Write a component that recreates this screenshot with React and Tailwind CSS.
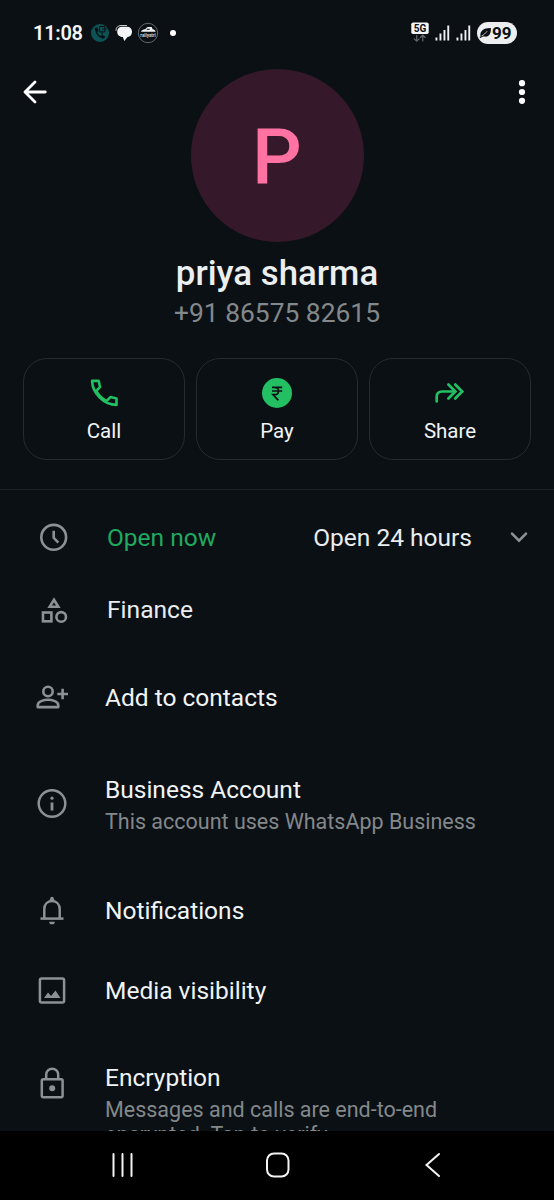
import clsx from "clsx";

const ClockIcon = () => (
  <svg width="30" height="30" viewBox="0 0 30 30" fill="none" stroke="currentColor" strokeWidth="2.6">
    <circle cx="14.7" cy="14.3" r="12.4" />
    <path d="M14.7 7.800v7l4.600 4.800" />
  </svg>
);

const CategoryIcon = () => (
  <svg width="30" height="30" viewBox="0 0 30 30" fill="none" stroke="currentColor" strokeWidth="2.600">
    <path d="M15 4.700l4.300 7h-8.600z" />
    <rect x="4" y="17.500" width="8.400" height="8.800" />
    <circle cx="22.200" cy="21.900" r="4.800" />
  </svg>
);

const AddPersonIcon = () => (
  <svg width="34" height="30" viewBox="0 0 34 30" fill="none" stroke="currentColor" strokeWidth="2.600">
    <circle cx="13" cy="8.500" r="4.700" />
    <path d="M2.700 22.500c0-2.300 1.300-3.600 3.400-4.400 4.400-1.700 9.400-1.700 13.800 0 2.100.8 3.400 2.100 3.400 4.400v1.600H2.700z" strokeLinejoin="round" />
    <path d="M27.600 5.800v10.500M22.300 11h10.700" />
  </svg>
);

const InfoIcon = () => (
  <svg width="30" height="30" viewBox="0 0 30 30" fill="none" stroke="currentColor" strokeWidth="2.500">
    <circle cx="15" cy="14.500" r="13.300" />
    <path d="M15 13.500v8" strokeWidth="2.800" />
    <circle cx="15" cy="9.200" r="1.600" fill="currentColor" stroke="none" />
  </svg>
);

const BellIcon = () => (
  <svg width="30" height="30" viewBox="0 0 30 30" fill="none" stroke="currentColor" strokeWidth="2.500">
    <path d="M7.300 22v-8.700c0-5 3.200-8.200 7.700-8.200s7.700 3.200 7.700 8.200V22" />
    <path d="M3.500 22.600h23" />
    <path d="M12.200 5.500l1-3a1.800 1.800 0 0 1 3.600 0l1 3z" fill="currentColor" stroke="none" />
    <path d="M12.200 25.700h5.600a2.800 2.600 0 0 1-5.600 0z" fill="currentColor" stroke="none" />
  </svg>
);

const MediaIcon = () => (
  <svg width="30" height="30" viewBox="0 0 30 30" fill="none" stroke="currentColor" strokeWidth="2.500">
    <rect x="2.900" y="2.600" width="24.200" height="24" rx="1.800" />
    <path d="M7 22l4-5.600 3.100 3.500 4.400-5.300L23.500 22z" fill="currentColor" stroke="none" />
  </svg>
);

const LockIcon = () => (
  <svg width="30" height="34" viewBox="0 0 30 34" fill="none" stroke="currentColor" strokeWidth="2.500">
    <rect x="4.800" y="13.200" width="20.800" height="18" rx="1.500" />
    <path d="M9.200 13V8.700a6 6 0 0 1 12 0V13" />
    <circle cx="15.200" cy="22.300" r="3" fill="currentColor" stroke="none" />
  </svg>
);

const CallIcon = () => (
  <svg width="32" height="32" viewBox="0 0 32 32" fill="none" stroke="#22c063" strokeWidth="2.600" strokeLinejoin="round">
    <path d="M4.100 3.900h6.600l1.300 6.200-3.900 3.900c2.500 4.400 6 7.700 10.400 10.100l3.900-4 6.100 1.300v6.500C16.200 27.900 4.300 16.100 4.100 3.900z" />
  </svg>
);

const PayIcon = () => (
  <svg width="32" height="32" viewBox="0 0 32 32" fill="none">
    <circle cx="16" cy="16" r="15" fill="#22c063" />
    <path d="M11 10.300h10.200M11 14h10.200M11 10.300h2.600c5.200 0 5.200 7.400 0 7.400H12l5.400 5.600" stroke="#0b1014" strokeWidth="1.700" />
  </svg>
);

const ShareIcon = () => (
  <svg width="32" height="32" viewBox="0 0 32 32" fill="none" stroke="#22c063" strokeWidth="2.700" strokeLinecap="round">
    <path d="M2.700 24.500v-4.800q0-5.200 5.400-5.200h12.700" />
    <path d="M14.400 7.500l7 7-7 7M21.200 7.500l7 7-7 7" />
  </svg>
);

const SignalBars = ({ className }) => (
  <svg className={clsx(className)} width="15" height="16" viewBox="0 0 15 16" fill="#eef0f1">
    <rect x="0.500" y="12.500" width="1.900" height="3" />
    <rect x="4.500" y="8.500" width="1.900" height="7" />
    <rect x="8.500" y="5" width="1.900" height="10.500" />
    <rect x="12.300" y="0.500" width="1.900" height="15" />
  </svg>
);

const StatusBar = () => (
  <div className="flex h-[66px] shrink-0 items-center pl-[33px] pr-[37px]">
    <span className="w-[51px] text-[20px] font-semibold tracking-[-0.3px] text-[#f4f6f7]">11:08</span>
    <div className="flex items-center">
      <svg className="ml-[6px]" width="20" height="20" viewBox="0 0 20 20" fill="none">
        <circle cx="10" cy="10" r="9" fill="#0d5355" />
        <path d="M5.200 4.800c-1.500 1.700 1.600 8.600 6.300 10.400 2.100.8 3.900-.2 3.600-1.600l-2.700-1.700-1.500 1.200c-1.800-.8-3-2.300-3.500-3.900l1.200-1.500-1.300-3.100z" fill="#0b1014" />
        <path d="M9.500 3.500h5.400v5.400h-5.400zM12 6h4.500M12 8.900v3" stroke="#0b1014" strokeWidth="1" />
      </svg>
      <svg className="ml-[5px]" width="20" height="20" viewBox="0 0 20 20">
        <path d="M1 7.800C.9 4.300 3 2.700 6 2.500h6" fill="none" stroke="#c9cccd" strokeWidth="1" />
        <path d="M7 3.700h5c3.200 0 5 2 5 5s-1.800 5-4.500 5.300l-3.200 4-1.500-4C4.200 13.800 2.200 11.700 2.200 8.700c0-3 1.800-5 4.800-5z" fill="#f4f6f7" />
      </svg>
      <svg className="ml-[2px]" width="22" height="22" viewBox="0 0 22 22" fill="none">
        <circle cx="11" cy="11" r="9.700" stroke="#62686c" />
        <path d="M3.800 9.800c1.300-2.100 3.100-2.500 4.600-2.500.7-1.700 2-2.200 3.900-2.200h2.500l.8 2.200c1.700.2 2.700 1.100 3 2.500z" fill="#eef0f1" />
        <path d="M9.700 7.300h3" stroke="#0b1014" />
        <text x="11" y="14.600" textAnchor="middle" fontSize="4.500" fontWeight="700" fill="#cdd0d2">railyatri</text>
      </svg>
      <span className="ml-[11px] h-[6px] w-[6px] rounded-full bg-white" />
    </div>

    <div className="ml-auto flex items-center">
      <svg width="18" height="22" viewBox="0 0 18 22" fill="none">
        <rect x="0.300" y="0.500" width="17.400" height="11.500" rx="1.800" fill="#f4f6f7" />
        <text x="9" y="9.800" textAnchor="middle" fontSize="10" fontWeight="700" fill="#0b1014">5G</text>
        <path d="M5.700 13v6M3 16.600l2.700 2.600 2.700-2.600M11.800 19.500v-6M9.100 15.800l2.700-2.600 2.700 2.600" stroke="#62686c" strokeWidth="1.200" />
      </svg>
      <SignalBars className="ml-[6px]" />
      <SignalBars className="ml-[6px]" />
      <div className="ml-[6px] flex h-[22px] w-[40px] items-center rounded-full bg-[#eceeef] pl-[2px] text-[#0b1014]">
        <svg width="13" height="12" viewBox="0 0 13 12">
          <path d="M1.500 9.300C.6 4 4.600.8 11.800 1c.5 5.400-1.800 9.200-6 8.600-1 0-1.700-.2-2.300-.6z" fill="currentColor" />
          <path d="M.8 10.500C3 9.800 5.300 7.500 8 4.600" stroke="currentColor" strokeWidth="1.200" fill="none" />
          <path d="M2.600 8.900C4.700 8.200 6.200 6.300 8.200 4.200" stroke="#eceeef" strokeWidth=".8" fill="none" />
        </svg>
        <span className="text-[17px] font-bold leading-none">99</span>
      </div>
    </div>
  </div>
);

const ActionButton = ({ icon, label }) => (
  <button className="flex h-[102px] flex-1 flex-col items-center rounded-[24px] border border-[#262b2f] pt-[18px]">
    {icon}
    <span className="mt-[8px] text-[20.5px] leading-[28px] text-[#f1f4f5]">{label}</span>
  </button>
);

const SettingRow = ({ icon, title, subtitle, className }) => (
  <div className={clsx("flex items-center text-[#8b9194]", className)}>
    <div className="flex w-[105px] shrink-0 justify-center pr-px">{icon}</div>
    <div>
      <p className="text-[24.5px] leading-[32px] text-[#f1f4f5]">{title}</p>
      {subtitle && <p className="mt-[3px] w-[380px] text-[21.5px] leading-[25px] text-[#83888b]">{subtitle}</p>}
    </div>
  </div>
);

const App = () => {
  return (
    <div className="flex h-[1200px] w-[554px] flex-col overflow-hidden bg-[#0b1014] font-[Roboto,sans-serif]">
      <div className="flex min-h-0 flex-1 flex-col overflow-hidden">
        <StatusBar />

        {/* Profile header */}
        <div className="flex shrink-0 justify-between pt-[3px]">
          <svg className="ml-[22px] mt-[10px]" width="26" height="26" viewBox="0 0 26 26" fill="none" stroke="#fff" strokeWidth="2.800" strokeLinecap="round" strokeLinejoin="round">
            <path d="M23.300 13H3M13 3L3 13l10 10" />
          </svg>
          <div className="-ml-[3px] flex h-[173px] w-[173px] items-center justify-center rounded-full bg-[#35192b] pt-[3px] text-[78px] font-medium text-[#ff72a1]">P</div>
          <svg className="mr-[19px] mt-[10px]" width="26" height="26" viewBox="0 0 26 26" fill="#fff">
            <circle cx="13" cy="4.200" r="3.100" />
            <circle cx="13" cy="13" r="3.100" />
            <circle cx="13" cy="21.800" r="3.100" />
          </svg>
        </div>
        <h1 className="mt-[11px] shrink-0 text-center text-[34.8px] font-medium leading-[40px] text-[#eceff0]">priya sharma</h1>
        <p className="mt-[4px] shrink-0 text-center text-[26.4px] leading-[32px] text-[#83888b]">+91 86575 82615</p>

        <div className="mx-[23px] mt-[29px] flex shrink-0 gap-[11px]">
          <ActionButton icon={<CallIcon />} label="Call" />
          <ActionButton icon={<PayIcon />} label="Pay" />
          <ActionButton icon={<ShareIcon />} label="Share" />
        </div>

        <div className="mt-[29px] h-px shrink-0 bg-[#1b2024]" />

        {/* Business info */}
        <div className="mt-[12px] flex h-[72px] shrink-0 items-center text-[24.5px] text-[#8b9194]">
          <div className="flex w-[107px] justify-center">
            <ClockIcon />
          </div>
          <span className="text-[#21a961]">Open now</span>
          <span className="ml-auto text-[#e9edef]">Open 24 hours</span>
          <svg className="ml-[37px] mr-[25px]" width="20" height="20" viewBox="0 0 20 20" fill="none" stroke="currentColor" strokeWidth="2.600" strokeLinecap="round">
            <path d="M3 5.700l7 7 7-7" />
          </svg>
        </div>
        <div className="flex h-[72px] shrink-0 items-center text-[24.6px] text-[#8b9194]">
          <div className="flex w-[107px] justify-center">
            <CategoryIcon />
          </div>
          <span className="text-[#e9edef]">Finance</span>
        </div>

        {/* Settings */}
        <SettingRow icon={<AddPersonIcon />} title="Add to contacts" className="h-[104px] shrink-0" />
        <SettingRow
          icon={<InfoIcon />}
          title="Business Account"
          subtitle="This account uses WhatsApp Business"
          className="h-[108px] shrink-0"
        />
        <SettingRow icon={<BellIcon />} title="Notifications" className="h-[106px] shrink-0" />
        <SettingRow icon={<MediaIcon />} title="Media visibility" className="h-[54px] shrink-0" />
        <SettingRow
          icon={<div className="mb-[44px]"><LockIcon /></div>}
          title="Encryption"
          subtitle="Messages and calls are end-to-end encrypted. Tap to verify."
          className="mt-[44px] shrink-0"
        />
      </div>

      {/* Android navigation */}
      <div className="flex h-[69px] shrink-0 items-center justify-between bg-black pb-px pl-[107px] pr-[106px]">
        <svg width="32" height="32" viewBox="0 0 32 32" stroke="#f4f4f4" strokeWidth="2" strokeLinecap="round">
          <path d="M6.500 5v22M15.500 5v22M24.500 5v22" />
        </svg>
        <svg width="32" height="32" viewBox="0 0 32 32" fill="none" stroke="#f4f4f4" strokeWidth="2">
          <rect x="5" y="4.500" width="21.500" height="23" rx="7" />
        </svg>
        <svg width="32" height="32" viewBox="0 0 32 32" fill="none" stroke="#f4f4f4" strokeWidth="2" strokeLinecap="round">
          <path d="M23 5L10.500 16 23 27" />
        </svg>
      </div>
    </div>
  );
};

export default App;
